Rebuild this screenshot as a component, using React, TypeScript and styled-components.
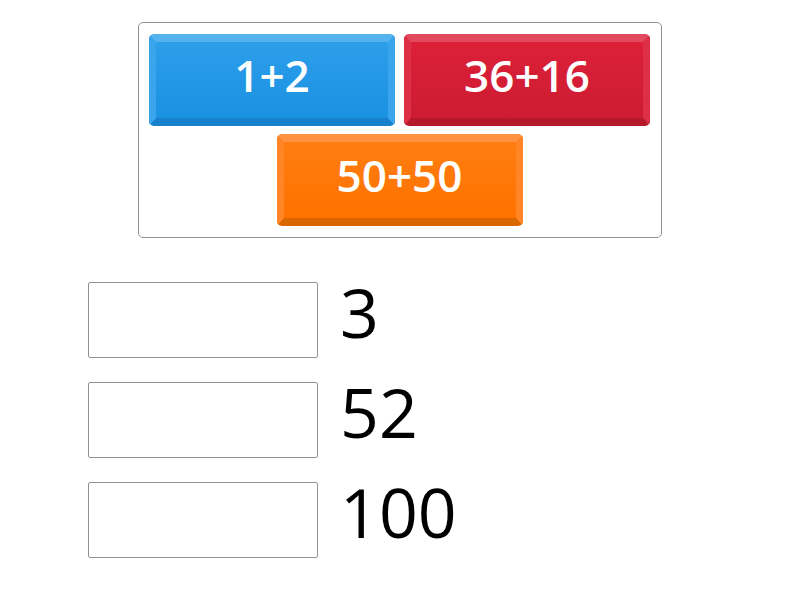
import React from 'react';
import styled, { createGlobalStyle } from 'styled-components';

const GlobalStyle = createGlobalStyle`
  html, body {
    margin: 0;
    padding: 0;
    background: #ffffff;
    font-family: "Open Sans", "Noto Sans", sans-serif;
  }
`;

interface TileColors {
  top : string;
  side : string;
  bottom : string;
  from : string;
  to : string;
}

const palette : Record<string, TileColors> = {
  blue: { top: '#56b3f0', side: '#3aa5ec', bottom: '#1680cc', from: '#2c9fea', to: '#1b91e2' },
  red: { top: '#e14a5c', side: '#dd3047', bottom: '#b5192c', from: '#dc2038', to: '#cc1c32' },
  orange: { top: '#ff9340', side: '#ff8526', bottom: '#d96600', from: '#ff7d10', to: '#ff7200' },
};

const Page = styled.div`
  width: 800px;
  height: 600px;
  padding-top: 22px;
  box-sizing: border-box;
`;

const Tray = styled.div`
  width: 524px;
  height: 216px;
  margin-left: 138px;
  box-sizing: border-box;
  border: 1px solid #939393;
  border-radius: 5px;
  padding: 11px 11px 0 10px;
  display: flex;
  flex-wrap: wrap;
  justify-content: center;
  align-content: flex-start;
  column-gap: 9px;
  row-gap: 8px;
`;

const Tile = styled.div<{ tone : TileColors }>`
  width: 246px;
  height: 92px;
  box-sizing: border-box;
  border-radius: 5px;
  border-style: solid;
  border-width: 8px 7px 8px 7px;
  border-top-color: ${p => p.tone.top};
  border-left-color: ${p => p.tone.side};
  border-right-color: ${p => p.tone.side};
  border-bottom-color: ${p => p.tone.bottom};
  background: linear-gradient(${p => p.tone.from}, ${p => p.tone.to});
  display: flex;
  align-items: center;
  justify-content: center;
  color: #ffffff;
  font-size: 44px;
  font-weight: 600;
  line-height: 1;
  padding-bottom: 10px;
`;

const Answers = styled.div`
  margin-top: 44px;
  margin-left: 88px;
  display: flex;
  flex-direction: column;
  gap: 24px;
`;

const Row = styled.div`
  display: flex;
  align-items: center;
  gap: 22px;
`;

const Slot = styled.div`
  width: 230px;
  height: 76px;
  box-sizing: border-box;
  border: 1px solid #939393;
  border-radius: 2px;
  background: #ffffff;
`;

const Label = styled.div`
  font-size: 68px;
  line-height: 1;
  color: #000000;
  margin-top: -16px;
`;

const tiles = [
  { text: '1+2', tone: palette.blue },
  { text: '36+16', tone: palette.red },
  { text: '50+50', tone: palette.orange },
];

const answers = ['3', '52', '100'];

const App = () => (
  <Page>
    <GlobalStyle />
    <Tray>
      {tiles.map(({ text, tone }) => (
        <Tile key={text} tone={tone}>{text}</Tile>
      ))}
    </Tray>
    <Answers>
      {answers.map(a => (
        <Row key={a}>
          <Slot />
          <Label>{a}</Label>
        </Row>
      ))}
    </Answers>
  </Page>
);

export default App;
